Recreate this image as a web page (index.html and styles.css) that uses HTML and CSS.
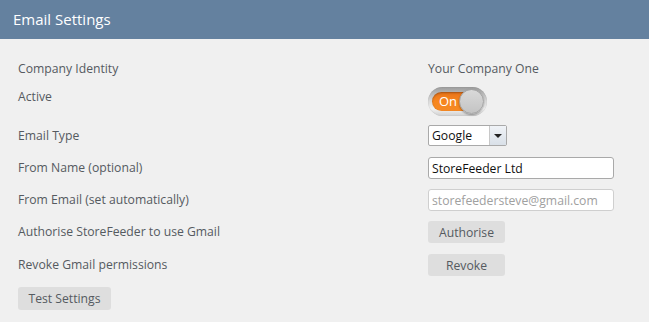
FILE: index.html
```html
<!DOCTYPE html>
<html>
<head>
<meta charset="utf-8">
<link rel="stylesheet" href="styles.css">
</head>
<body>
<div class="panel">
  <div class="header">Email Settings</div>
  <div class="content">
    <div class="row r-company">
      <div class="label">Company Identity</div>
      <div class="value">Your Company One</div>
    </div>
    <div class="row r-active">
      <div class="label">Active</div>
      <div class="toggle">
        <div class="track"><span class="on">On</span></div>
        <div class="knob"></div>
      </div>
    </div>
    <div class="row r-type">
      <div class="label">Email Type</div>
      <div class="select">
        <span class="select-text">Google</span>
        <span class="select-btn"><span class="tri"></span></span>
      </div>
    </div>
    <div class="row r-input">
      <div class="label">From Name (optional)</div>
      <input class="input" type="text" value="StoreFeeder Ltd">
    </div>
    <div class="row r-input">
      <div class="label">From Email (set automatically)</div>
      <input class="input disabled" type="text" value="storefeedersteve@gmail.com" disabled>
    </div>
    <div class="row r-btn">
      <div class="label">Authorise StoreFeeder to use Gmail</div>
      <button class="btn">Authorise</button>
    </div>
    <div class="row r-btn">
      <div class="label">Revoke Gmail permissions</div>
      <button class="btn">Revoke</button>
    </div>
    <div class="row r-test">
      <button class="btn btn-test">Test Settings</button>
    </div>
  </div>
</div>
</body>
</html>
```

FILE: styles.css
```css
* { box-sizing: border-box; }
html, body { margin: 0; padding: 0; }
body {
  background: #f0f0f0;
  font-family: "Open Sans", "Noto Sans", sans-serif;
  font-size: 12.2px;
  color: #555a60;
  width: 649px;
  height: 322px;
  overflow: hidden;
}
.header {
  height: 39px;
  background: #64819f;
  color: #ffffff;
  font-size: 15px;
  line-height: 39px;
  padding-left: 13px;
}
.content {
  padding: 20px 18px 0 18px;
}
.row {
  display: flex;
  align-items: center;
}
.label {
  width: 410px;
  flex: none;
  line-height: 20px;
}
.value { line-height: 20px; }
.r-company { height: 20px; margin-bottom: 8px; }
.r-active { height: 29px; align-items: flex-start; margin-bottom: 9px; }
.r-type { height: 21px; margin-bottom: 11px; }
.r-input { height: 22px; margin-bottom: 10px; }
.r-btn { height: 22px; margin-bottom: 11px; }
.r-test { height: 23px; }

.toggle {
  position: relative;
  width: 59px;
  height: 29px;
  border-radius: 15px;
  background: linear-gradient(#9c9c9c, #d6d6d6 45%, #f2f2f2 75%, #cfcfcf);
  box-shadow: inset 0 0 1px rgba(0,0,0,0.25);
}
.track {
  position: absolute;
  left: 4px;
  top: 5px;
  width: 42px;
  height: 19px;
  border-radius: 10px;
  background: linear-gradient(#e8731a, #f7861f 50%, #f58a25);
  box-shadow: inset 0 1px 2px rgba(0,0,0,0.3);
}
.on {
  position: absolute;
  left: 7px;
  top: 0;
  line-height: 19px;
  color: #ffffff;
  font-size: 13px;
}
.knob {
  position: absolute;
  left: 31px;
  top: 2px;
  width: 25px;
  height: 25px;
  border-radius: 50%;
  background: linear-gradient(#d9d9d9, #c4c4c4);
  border: 1px solid #a3a3a3;
  box-shadow: 0 1px 2px rgba(0,0,0,0.35);
}

.select {
  width: 79px;
  height: 21px;
  background: #ffffff;
  border: 1px solid #a9a9a9;
  border-radius: 2px;
  display: flex;
  align-items: stretch;
}
.select-text {
  flex: 1;
  color: #111;
  line-height: 19px;
  padding-left: 3px;
  font-size: 12.2px;
}
.select-btn {
  width: 17px;
  border-left: 1px solid #c8c8c8;
  background: linear-gradient(#f0f3f7, #d9e0e8);
  display: flex;
  align-items: center;
  justify-content: center;
}
.tri {
  width: 0;
  height: 0;
  border-left: 4px solid transparent;
  border-right: 4px solid transparent;
  border-top: 4px solid #222;
}

.input {
  width: 186px;
  height: 22px;
  border: 1px solid #a9a9a9;
  border-radius: 3px;
  background: #ffffff;
  font-family: inherit;
  font-size: 12.2px;
  color: #111;
  padding: 0 3px;
  margin: 0;
  outline: none;
}
.input.disabled {
  border-color: #cfcfcf;
  color: #a0a0a0;
  background: #ffffff;
}

.btn {
  width: 77px;
  height: 22px;
  border: none;
  border-radius: 3px;
  background: #dedede;
  color: #555a60;
  font-family: inherit;
  font-size: 12.2px;
  padding: 0;
  margin: 0;
}
.btn-test {
  width: 93px;
  height: 23px;
}
```
